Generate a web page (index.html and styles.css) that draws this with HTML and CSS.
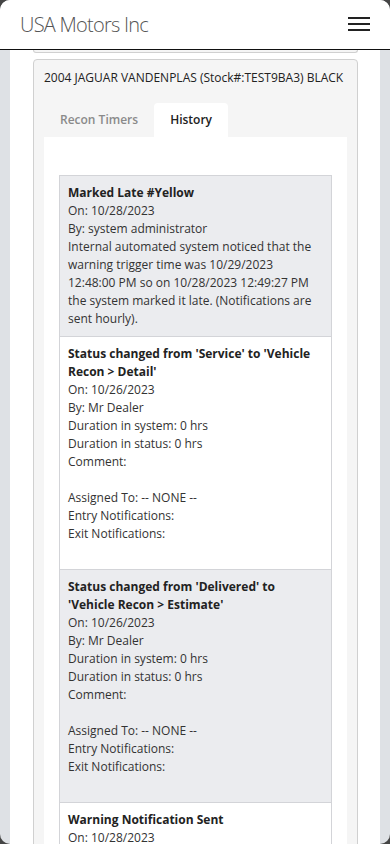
FILE: index.html
```html
<!DOCTYPE html>
<html lang="en">
<head>
  <meta charset="UTF-8">
  <meta name="viewport" content="width=device-width, initial-scale=1.0">
  <title>USA Motors Inc - History</title>
  <link rel="stylesheet" href="styles.css">
</head>
<body>
  <div class="screen">
    <header class="topbar">
      <span class="brand">USA Motors Inc</span>
      <button class="menu-btn" aria-label="Menu">
        <svg width="22" height="16" viewBox="0 0 22 16">
          <rect x="0" y="1" width="22" height="2" fill="#222"/>
          <rect x="0" y="7" width="22" height="2" fill="#222"/>
          <rect x="0" y="13" width="22" height="2" fill="#222"/>
        </svg>
      </button>
    </header>

    <div class="main">
      <div class="panel">
        <div class="card-tail"></div>

        <div class="card">
          <div class="vehicle">2004 JAGUAR VANDENPLAS (Stock#:TEST9BA3) BLACK</div>

          <ul class="tabs">
            <li class="tab">Recon Timers</li>
            <li class="tab active">History</li>
          </ul>

          <div class="tab-content">
            <ul class="history">
              <li class="entry shaded">
                <strong>Marked Late #Yellow</strong><br>
                On: 10/28/2023<br>
                By: system administrator<br>
                Internal automated system noticed that the warning trigger time was 10/29/2023 12:48:00 PM so on 10/28/2023 12:49:27 PM the system marked it late. (Notifications are sent hourly).
              </li>
              <li class="entry">
                <strong>Status changed from 'Service' to 'Vehicle Recon &gt; Detail'</strong><br>
                On: 10/26/2023<br>
                By: Mr Dealer<br>
                Duration in system: 0 hrs<br>
                Duration in status: 0 hrs<br>
                Comment: <br><br>
                Assigned To: -- NONE --<br>
                Entry Notifications: <br>
                Exit Notifications: <br>&nbsp;
              </li>
              <li class="entry shaded">
                <strong>Status changed from 'Delivered' to 'Vehicle Recon &gt; Estimate'</strong><br>
                On: 10/26/2023<br>
                By: Mr Dealer<br>
                Duration in system: 0 hrs<br>
                Duration in status: 0 hrs<br>
                Comment: <br><br>
                Assigned To: -- NONE --<br>
                Entry Notifications: <br>
                Exit Notifications: <br>&nbsp;
              </li>
              <li class="entry">
                <strong>Warning Notification Sent</strong><br>
                On: 10/28/2023
              </li>
            </ul>
          </div>
        </div>
      </div>
    </div>
  </div>
</body>
</html>
```

FILE: styles.css
```css
html, body {
  margin: 0;
  padding: 0;
}
body {
  background-color: #454545;
  font-family: "Open Sans", Arial, sans-serif;
  color: #333;
}
.screen {
  height: 844px;
  overflow: hidden;
  border-radius: 10px;
  background-color: #dee1e5;
  display: flex;
  flex-direction: column;
}
.topbar {
  flex: none;
  height: 49px;
  background-color: #fff;
  border-bottom: 1px solid #111;
  display: flex;
  align-items: center;
  justify-content: space-between;
  padding: 0 20px;
}
.brand {
  font-size: 20px;
  font-weight: 300;
  color: #555;
  letter-spacing: -0.75px;
}
.menu-btn {
  border: none;
  background: none;
  padding: 0;
  display: flex;
  margin-top: -1px;
}
.main {
  flex: 1;
  padding: 0 10px;
  min-height: 0;
}
.panel {
  height: 100%;
  background-color: #fff;
  padding: 0 22px 0 23px;
}
.card-tail {
  height: 2px;
  background-color: #f5f5f5;
  border: 1px solid #d0d0d0;
  border-top: none;
  border-radius: 0 0 4px 4px;
  margin-bottom: 6px;
}
.card {
  background-color: #f5f5f5;
  border: 1px solid #d0d0d0;
  border-radius: 4px;
  padding: 9px 10px 0;
}
.vehicle {
  font-size: 12px;
  line-height: 18px;
  color: #222;
}
.tabs {
  list-style: none;
  margin: 16px 0 0;
  padding: 0;
  display: flex;
}
.tab {
  padding: 0 16px;
  height: 34px;
  line-height: 34px;
  font-size: 12px;
  font-weight: 600;
  color: #8a8a8a;
  border-radius: 4px 4px 0 0;
}
.tab.active {
  background-color: #fff;
  color: #222;
}
.tab-content {
  background-color: #fff;
  padding: 38px 15px 0;
  height: 700px;
}
.history {
  list-style: none;
  margin: 0;
  padding: 0;
}
.entry {
  font-size: 12px;
  line-height: 18px;
  color: #333;
  padding: 8px;
  border: 1px solid #d3d4d8;
  margin-bottom: -1px;
  background-color: #fff;
}
.entry.shaded {
  background-color: #ebecef;
}
.entry strong {
  color: #222;
  font-weight: 700;
}
```
